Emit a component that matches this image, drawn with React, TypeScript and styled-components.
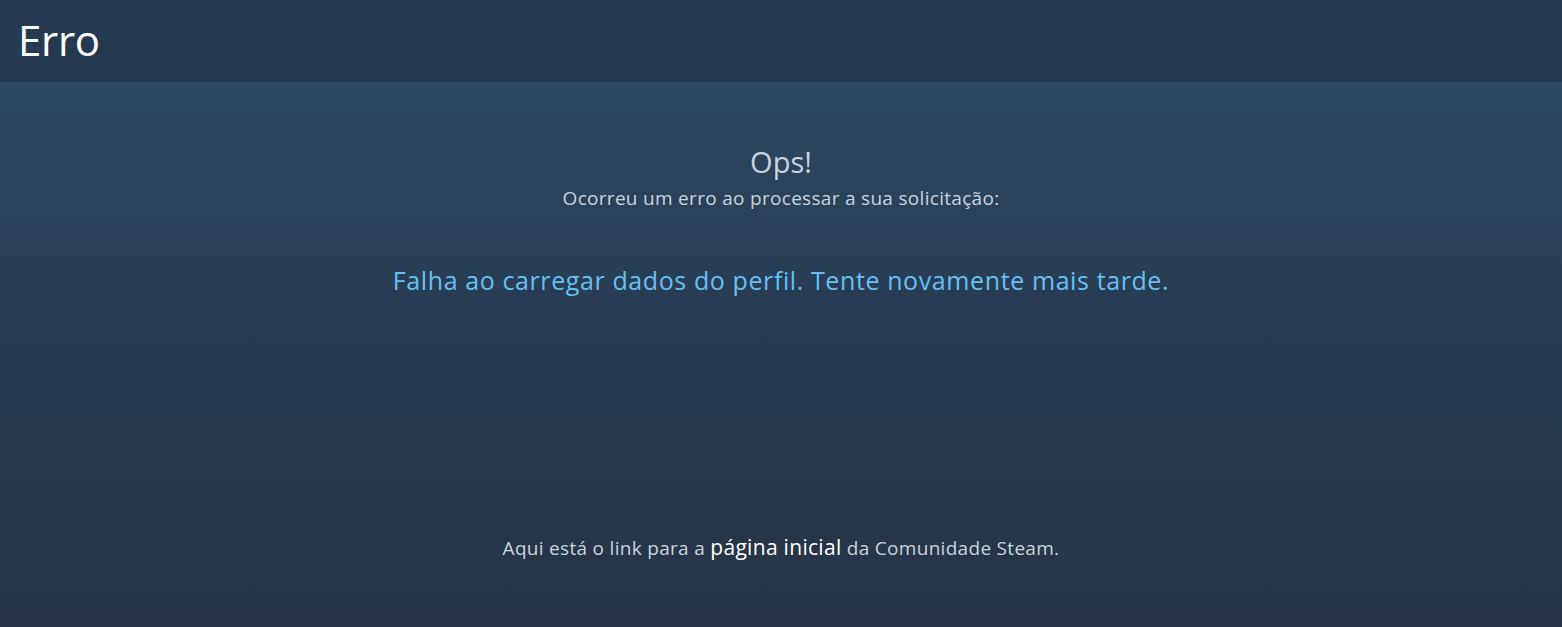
import styled, { createGlobalStyle } from "styled-components";

const GlobalStyle = createGlobalStyle`
  html, body {
    margin: 0;
    padding: 0;
    background: #26364a;
  }
  body {
    font-family: "Open Sans", "Noto Sans", Arial, sans-serif;
  }
`;

const Page = styled.div`
  display: flex;
  flex-direction: column;
  width: 100%;
  height: 627px;
`;

const Header = styled.div`
  display: flex;
  align-items: center;
  height: 82px;
  padding: 0 18px 4px;
  background: #253a50;
  box-sizing: border-box;
`;

const PageTitle = styled.h1`
  margin: 0;
  font-size: 42px;
  font-weight: 400;
  color: #ffffff;
  letter-spacing: -0.3px;
`;

const Body = styled.div`
  flex: 1;
  display: flex;
  flex-direction: column;
  align-items: center;
  padding-top: 62px;
  background: linear-gradient(to bottom, #2d4962 0%, #273a50 50%, #263445 100%);
`;

const Oops = styled.div`
  font-size: 29px;
  color: #c6d4df;
  line-height: 36px;
`;

const Subtitle = styled.div`
  margin-top: 6px;
  font-size: 19px;
  letter-spacing: 0.3px;
  color: #c6d4df;
  line-height: 24px;
`;

const ErrorText = styled.div`
  margin-top: 54px;
  font-size: 25px;
  letter-spacing: 0.6px;
  color: #66c0f4;
  line-height: 32px;
`;

const Footer = styled.div`
  margin-top: auto;
  margin-bottom: 66px;
  font-size: 19px;
  letter-spacing: 0.3px;
  color: #c6d4df;
`;

const HomeLink = styled.a`
  color: #ffffff;
  font-size: 21px;
  font-weight: 500;
  text-decoration: none;
`;

export default function App() {
  return (
    <Page>
      <GlobalStyle />
      <Header>
        <PageTitle>Erro</PageTitle>
      </Header>
      <Body>
        <Oops>Ops!</Oops>
        <Subtitle>Ocorreu um erro ao processar a sua solicitação:</Subtitle>
        <ErrorText>
          Falha ao carregar dados do perfil. Tente novamente mais tarde.
        </ErrorText>
        <Footer>
          Aqui está o link para a <HomeLink href="#">página inicial</HomeLink>{" "}
          da Comunidade Steam.
        </Footer>
      </Body>
    </Page>
  );
}
